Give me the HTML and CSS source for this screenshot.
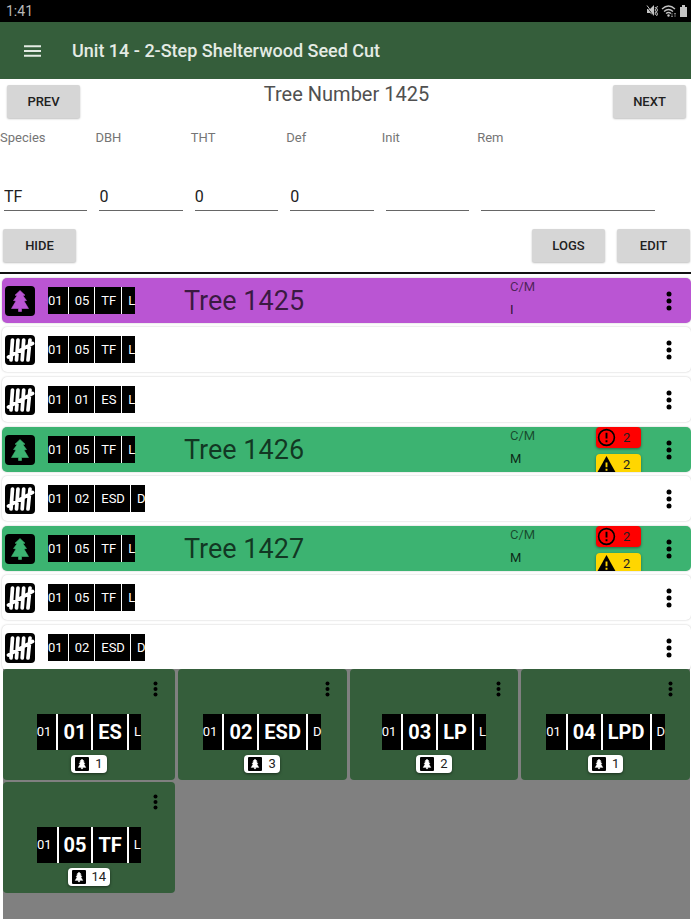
FILE: index.html
```
<!DOCTYPE html>
<html lang="en">
<head>
<meta charset="utf-8">
<meta name="viewport" content="width=device-width, initial-scale=1">
<title>Unit 14</title>
<link rel="stylesheet" href="styles.css">
</head>
<body>
<svg class="defs" aria-hidden="true">
  <symbol id="tree" viewBox="0 0 30 30">
    <path d="M15 4.500L10 9.200L12.200 9.600L8.500 14.500L11 15L6.500 22.500H13.500V25.500H16.500V22.500H23.500L19 15L21.500 14.500L17.800 9.600L20 9.200Z" fill="currentColor" stroke="currentColor" stroke-width=".6" stroke-linejoin="round"/>
  </symbol>
  <symbol id="tally" viewBox="0 0 30 30">
    <path d="M7.500 5L6 25M13 5L11.500 25M18.700 5L17.200 25M25 5L23 25M3.500 22L27.500 8.500" fill="none" stroke="#fff" stroke-width="3.700" stroke-linecap="round"/>
  </symbol>
  <symbol id="dots" viewBox="0 0 6 20">
    <circle cx="3" cy="3" r="2.500"/><circle cx="3" cy="10" r="2.500"/><circle cx="3" cy="17" r="2.500"/>
  </symbol>
  <symbol id="error" viewBox="0 0 20 20">
    <circle cx="10" cy="10" r="8.300" fill="none" stroke="#000" stroke-width="1.700"/>
    <path d="M9 5h2v6H9zM9 13h2v2H9z"/>
  </symbol>
  <symbol id="warn" viewBox="0 0 20 20">
    <path d="M10 1L20 19H0Z"/><path d="M9 8h2v5H9zM9 14.500h2v2H9z" fill="#ffd600"/>
  </symbol>
</svg>

<div class="status">
  <span>1:41</span>
  <svg class="status-icons" viewBox="0 0 42 14" aria-hidden="true">
    <g fill="#c4c4c4">
      <path d="M1 5h3l4-4v11L4 9H1z"/>
      <path d="M34 3h2V1h3v2h2v10h-7z"/>
    </g>
    <path d="M.5 2.500l7 9" stroke="#000" stroke-width=".8"/>
    <path d="M1 1.500l7 9.500M9 3l1 1.500-1 1.500 1 1.500-1 1.500 1 2M11.500 2l-1 2 1 2-1 2 1 2-1 2" fill="none" stroke="#c4c4c4"/>
    <g fill="none" stroke="#c4c4c4" stroke-width="1.300">
      <path d="M16 5q6.500-6 13 0M18 7.500q4.500-4 9 0M20 9.500q2.500-2 5 0"/>
    </g>
    <circle cx="22.500" cy="11.500" r="1.200" fill="#c4c4c4"/>
    <path d="M26 9v4m-1-1l1 1 1-1M29 13V9m-1 1l1-1 1 1" fill="none" stroke="#888" stroke-width=".8"/>
  </svg>
</div>

<header class="appbar">
  <button class="icon-button" aria-label="Menu">
    <svg class="menu-icon" viewBox="0 0 18 12"><path d="M0 0h18v2H0zM0 5h18v2H0zM0 10h18v2H0z" fill="#e4ebe4"/></svg>
  </button>
  <h1>Unit 14 - 2-Step Shelterwood Seed Cut</h1>
</header>

<main>
  <form class="editor">
    <div class="nav-row">
      <button type="button" class="btn">PREV</button>
      <h2>Tree Number 1425</h2>
      <button type="button" class="btn">NEXT</button>
    </div>
    <div class="fields">
      <div class="field"><label for="species">Species</label><input id="species" value="TF"></div>
      <div class="field"><label for="dbh">DBH</label><input id="dbh" value="0"></div>
      <div class="field"><label for="tht">THT</label><input id="tht" value="0"></div>
      <div class="field"><label for="def">Def</label><input id="def" value="0"></div>
      <div class="field"><label for="init">Init</label><input id="init"></div>
      <div class="field"><label for="rem">Rem</label><input id="rem"></div>
    </div>
    <div class="action-row">
      <button type="button" class="btn">HIDE</button>
      <button type="button" class="btn push">LOGS</button>
      <button type="button" class="btn">EDIT</button>
    </div>
  </form>

  <ul class="list">
    <li class="row tree purple">
      <span class="tile"><svg><use href="#tree"/></svg></span>
      <span class="chips"><span>01</span><span>05</span><span>TF</span><span>L</span></span>
      <span class="name">Tree 1425</span>
      <span class="meta"><span>C/M</span><b>I</b></span>
      <span class="flags"></span>
      <button class="more" aria-label="More"><svg><use href="#dots"/></svg></button>
    </li>
    <li class="row">
      <span class="tile"><svg><use href="#tally"/></svg></span>
      <span class="chips"><span>01</span><span>05</span><span>TF</span><span>L</span></span>
      <button class="more" aria-label="More"><svg><use href="#dots"/></svg></button>
    </li>
    <li class="row">
      <span class="tile"><svg><use href="#tally"/></svg></span>
      <span class="chips"><span>01</span><span>01</span><span>ES</span><span>L</span></span>
      <button class="more" aria-label="More"><svg><use href="#dots"/></svg></button>
    </li>
    <li class="row tree green">
      <span class="tile"><svg><use href="#tree"/></svg></span>
      <span class="chips"><span>01</span><span>05</span><span>TF</span><span>L</span></span>
      <span class="name">Tree 1426</span>
      <span class="meta"><span>C/M</span><b>M</b></span>
      <span class="flags"><span class="flag red"><svg><use href="#error"/></svg>2</span><span class="flag yellow"><svg><use href="#warn"/></svg>2</span></span>
      <button class="more" aria-label="More"><svg><use href="#dots"/></svg></button>
    </li>
    <li class="row">
      <span class="tile"><svg><use href="#tally"/></svg></span>
      <span class="chips"><span>01</span><span>02</span><span>ESD</span><span>D</span></span>
      <button class="more" aria-label="More"><svg><use href="#dots"/></svg></button>
    </li>
    <li class="row tree green">
      <span class="tile"><svg><use href="#tree"/></svg></span>
      <span class="chips"><span>01</span><span>05</span><span>TF</span><span>L</span></span>
      <span class="name">Tree 1427</span>
      <span class="meta"><span>C/M</span><b>M</b></span>
      <span class="flags"><span class="flag red"><svg><use href="#error"/></svg>2</span><span class="flag yellow"><svg><use href="#warn"/></svg>2</span></span>
      <button class="more" aria-label="More"><svg><use href="#dots"/></svg></button>
    </li>
    <li class="row">
      <span class="tile"><svg><use href="#tally"/></svg></span>
      <span class="chips"><span>01</span><span>05</span><span>TF</span><span>L</span></span>
      <button class="more" aria-label="More"><svg><use href="#dots"/></svg></button>
    </li>
    <li class="row">
      <span class="tile"><svg><use href="#tally"/></svg></span>
      <span class="chips"><span>01</span><span>02</span><span>ESD</span><span>D</span></span>
      <button class="more" aria-label="More"><svg><use href="#dots"/></svg></button>
    </li>
  </ul>

  <section class="cards">
    <article class="card">
      <button class="more" aria-label="More"><svg><use href="#dots"/></svg></button>
      <div class="chips"><span>01</span><span>01</span><span>ES</span><span>L</span></div>
      <div class="count"><span class="tile"><svg><use href="#tree"/></svg></span>1</div>
    </article>
    <article class="card">
      <button class="more" aria-label="More"><svg><use href="#dots"/></svg></button>
      <div class="chips"><span>01</span><span>02</span><span>ESD</span><span>D</span></div>
      <div class="count"><span class="tile"><svg><use href="#tree"/></svg></span>3</div>
    </article>
    <article class="card">
      <button class="more" aria-label="More"><svg><use href="#dots"/></svg></button>
      <div class="chips"><span>01</span><span>03</span><span>LP</span><span>L</span></div>
      <div class="count"><span class="tile"><svg><use href="#tree"/></svg></span>2</div>
    </article>
    <article class="card">
      <button class="more" aria-label="More"><svg><use href="#dots"/></svg></button>
      <div class="chips"><span>01</span><span>04</span><span>LPD</span><span>D</span></div>
      <div class="count"><span class="tile"><svg><use href="#tree"/></svg></span>1</div>
    </article>
    <article class="card">
      <button class="more" aria-label="More"><svg><use href="#dots"/></svg></button>
      <div class="chips"><span>01</span><span>05</span><span>TF</span><span>L</span></div>
      <div class="count"><span class="tile"><svg><use href="#tree"/></svg></span>14</div>
    </article>
  </section>
</main>
</body>
</html>
```

FILE: styles.css
```
* { box-sizing: border-box; }

body {
  margin: 0;
  min-height: 100vh;
  display: flex;
  flex-direction: column;
  background: #fff;
  color: #212121;
  font: 13px/16px Roboto, sans-serif;
}

h1, h2, ul { margin: 0; padding: 0; }
button { padding: 0; border: 0; background: none; font: inherit; color: inherit; }
svg { display: block; }
.defs { position: absolute; width: 0; height: 0; }

.status {
  height: 22px;
  padding: 0 3px 0 6px;
  display: flex;
  align-items: center;
  justify-content: space-between;
  background: #000;
  color: #b8b8b8;
  font-size: 14px;
}
.status-icons { width: 42px; height: 14px; }

.appbar {
  height: 57px;
  padding-left: 24px;
  display: flex;
  align-items: center;
  gap: 31px;
  background: #355e3b;
  color: #e4ebe4;
}
.appbar h1 { font-size: 18px; line-height: 24px; font-weight: 500; }
.menu-icon { width: 17px; height: 12px; }

main { flex: 1; display: flex; flex-direction: column; }

.editor { border-bottom: 2px solid #111; }

.btn {
  width: 73px;
  height: 33px;
  border-radius: 2px;
  background: #d6d6d6;
  box-shadow: 0 1px 2px rgba(0, 0, 0, .25);
  font-weight: 500;
}

.nav-row {
  padding: 6px 5px 0 7px;
  display: flex;
  justify-content: space-between;
  align-items: flex-start;
}
.nav-row h2 { font-size: 20px; line-height: 18px; font-weight: 400; color: #505050; }

.fields {
  margin-top: 12px;
  padding-right: 28px;
  display: grid;
  grid-template-columns: repeat(5, 19fr) 37fr;
}
.field { display: flex; flex-direction: column; min-width: 0; }
.field label { color: #757575; }
.field input {
  min-width: 0;
  height: 29px;
  margin: 36px 8px 0 4px;
  padding: 0;
  border: 0;
  border-bottom: 1px solid #666;
  border-radius: 0;
  background: none;
  color: #212121;
  font: 16px/24px Roboto, sans-serif;
}

.action-row {
  padding: 18px 1px 10px 3px;
  display: flex;
  gap: 12px;
}
.push { margin-left: auto; }

.list {
  height: 395px;
  padding: 4px 0 0 2px;
  overflow: hidden;
  list-style: none;
}

.row {
  height: 45px;
  margin-bottom: 5px;
  padding-left: 3px;
  display: grid;
  grid-template-columns: 43px 136px 326px 86px 45px 1fr;
  grid-template-rows: 45px;
  align-items: center;
  overflow: hidden;
  border-radius: 5px;
  background: #fff;
  box-shadow: 0 0 2px rgba(0, 0, 0, .25);
}
.row.tree { margin-bottom: 4px; }
.row.purple { background: #ba55d3; }
.row.green { background: #3cb371; }

.tile {
  width: 30px;
  height: 30px;
  border-radius: 4px;
  background: #000;
  color: #fff;
}
.tile svg { width: 100%; height: 100%; }
.purple .tile { color: #ba55d3; }
.green .tile { color: #3cb371; }

.chips { display: flex; justify-self: start; color: #fff; }
.chips span {
  height: 27px;
  padding: 0 5px 0 6px;
  display: flex;
  align-items: center;
  background: #000;
  border-right: 1px solid #fff;
}
.chips span:first-child { padding-left: 0; }
.chips span:last-child { padding-right: 0; border-right: 0; }

.name { font-size: 27px; line-height: 32px; color: rgba(0, 0, 0, .7); }
.meta {
  align-self: start;
  padding-top: 1px;
  display: grid;
  gap: 7px;
  color: rgba(0, 0, 0, .6);
}
.meta b { font-weight: 400; color: rgba(0, 0, 0, .8); }

.flags { align-self: start; display: grid; gap: 6px; }
.flag {
  height: 21px;
  padding-left: 1px;
  display: flex;
  align-items: center;
  gap: 7px;
  border-radius: 4px;
  box-shadow: 0 1px 3px rgba(0, 0, 0, .4);
}
.flag svg { width: 19px; height: 19px; }
.red { background: #f00; }
.yellow { background: #ffd600; }

.more { grid-column: 6; justify-self: end; margin-right: 19px; }
.more svg { width: 6px; height: 20px; }

.cards {
  flex: 1;
  margin: 0 1px 2px 3px;
  display: grid;
  grid-template-columns: repeat(4, 1fr);
  align-content: start;
  row-gap: 2px;
  background: #808080;
}
.card {
  height: 111px;
  margin-left: 3px;
  padding-top: 12px;
  display: flex;
  flex-direction: column;
  align-items: center;
  border-radius: 4px;
  background: #355e3b;
}
.card:nth-child(4n+1) { margin-left: 0; }
.card .more { align-self: flex-end; margin-right: 17px; }
.card .more svg { width: 5px; height: 16px; }
.card .chips { margin-top: 17px; }
.card .chips span { height: 36px; padding: 0 5px; border-right-width: 2px; }
.card .chips span:first-child { padding-left: 0; }
.card .chips span:last-child { padding-right: 0; }
.card .chips span:nth-child(2),
.card .chips span:nth-child(3) { font-size: 20px; font-weight: 700; }
.count {
  height: 18px;
  margin-top: 5px;
  padding: 0 4px;
  display: flex;
  align-items: center;
  gap: 6px;
  border-radius: 4px;
  background: #fff;
  box-shadow: 0 1px 3px rgba(0, 0, 0, .5);
}
.count .tile { width: 14px; height: 14px; border-radius: 1px; }
```
